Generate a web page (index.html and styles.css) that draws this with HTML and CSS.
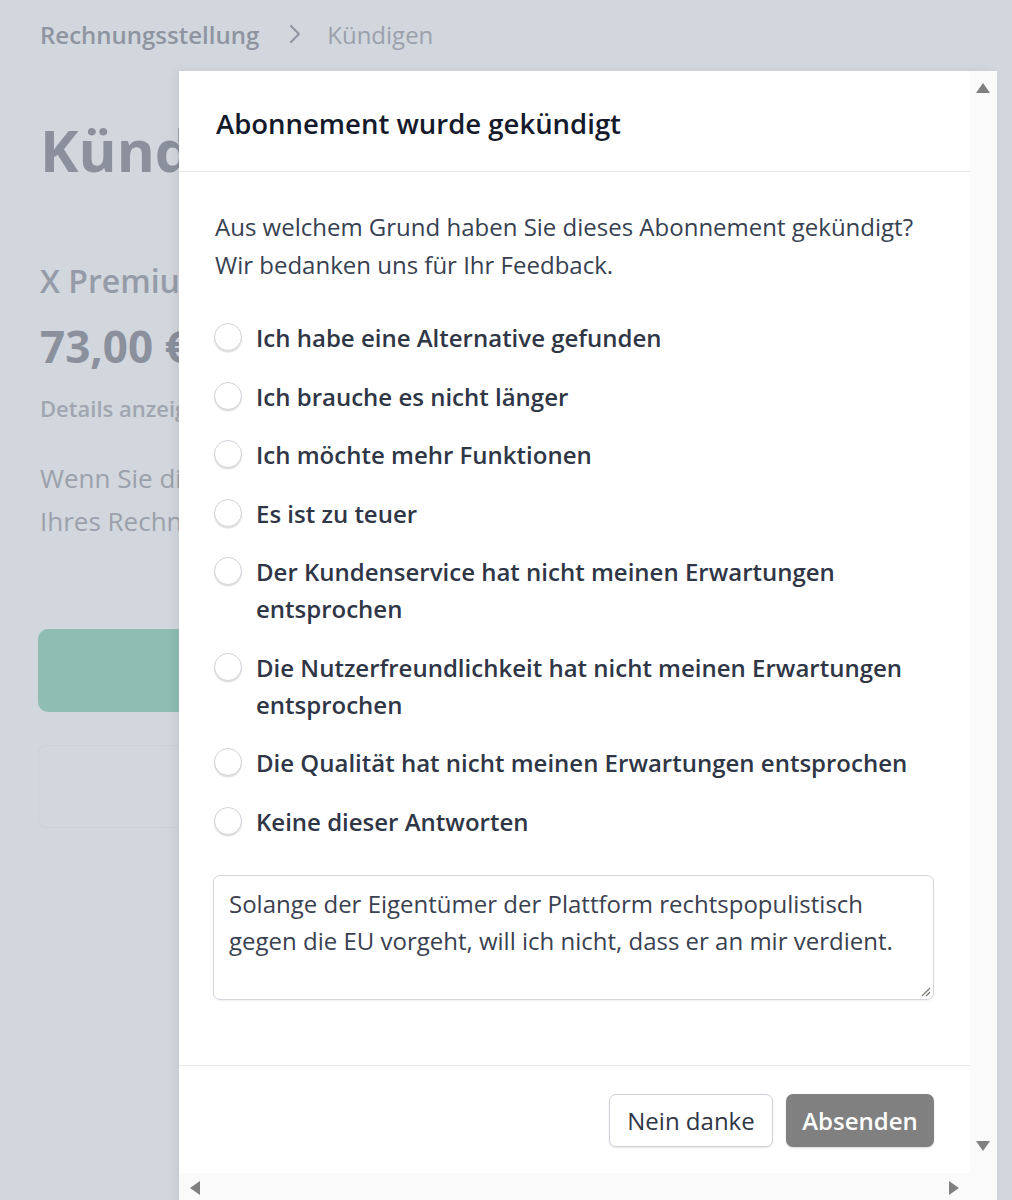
FILE: index.html
```html
<!DOCTYPE html>
<html lang="de">
<head>
<meta charset="utf-8">
<title>Abonnement kündigen</title>
<link rel="stylesheet" href="styles.css">
</head>
<body>
<div class="page">
  <nav class="crumbs">
    <span class="crumb-strong">Rechnungsstellung</span>
    <svg class="chev" width="14" height="22" viewBox="0 0 14 22"><path d="M3 3 L11 11 L3 19" fill="none" stroke="#8e95a1" stroke-width="2" stroke-linecap="round" stroke-linejoin="round"/></svg>
    <span class="crumb">Kündigen</span>
  </nav>
  <div class="clip">
    <h1 class="title">Kündigen</h1>
    <div class="plan">X Premium</div>
    <div class="price">73,00 €</div>
    <div class="details">Details anzeigen</div>
    <p class="info">Wenn Sie die Kündigung bestätigen<br>Ihres Rechnungszeitraums.</p>
  </div>
  <div class="btn-green"></div>
  <div class="btn-outline"></div>
</div>

<div class="modal">
  <div class="modal-main">
    <div class="modal-head">Abonnement wurde gekündigt</div>
    <div class="modal-body">
      <p class="question">Aus welchem Grund haben Sie dieses Abonnement gekündigt?<br>Wir bedanken uns für Ihr Feedback.</p>
      <ul class="options">
        <li class="option"><span class="radio"></span><span class="label">Ich habe eine Alternative gefunden</span></li>
        <li class="option"><span class="radio"></span><span class="label">Ich brauche es nicht länger</span></li>
        <li class="option"><span class="radio"></span><span class="label">Ich möchte mehr Funktionen</span></li>
        <li class="option"><span class="radio"></span><span class="label">Es ist zu teuer</span></li>
        <li class="option"><span class="radio"></span><span class="label">Der Kundenservice hat nicht meinen Erwartungen entsprochen</span></li>
        <li class="option"><span class="radio"></span><span class="label">Die Nutzerfreundlichkeit hat nicht meinen Erwartungen entsprochen</span></li>
        <li class="option"><span class="radio"></span><span class="label">Die Qualität hat nicht meinen Erwartungen entsprochen</span></li>
        <li class="option"><span class="radio"></span><span class="label">Keine dieser Antworten</span></li>
      </ul>
      <div class="textarea">
        <span class="ta-text">Solange der Eigentümer der Plattform rechtspopulistisch gegen die EU vorgeht, will ich nicht, dass er an mir verdient.</span>
        <svg class="grip" width="12" height="12" viewBox="0 0 12 12"><path d="M11 3 L3 11 M11 7 L7 11" stroke="#7a7a7a" stroke-width="1.2"/></svg>
      </div>
    </div>
    <div class="modal-foot">
      <button class="btn btn-secondary">Nein danke</button>
      <button class="btn btn-primary">Absenden</button>
    </div>
  </div>
  <div class="vscroll">
    <span class="arr arr-up"></span>
    <span class="arr arr-down"></span>
  </div>
  <div class="hscroll">
    <span class="arr arr-left"></span>
    <span class="arr arr-right"></span>
  </div>
  <div class="corner"></div>
</div>
</body>
</html>
```

FILE: styles.css
```css
html, body {
  margin: 0;
  padding: 0;
}
body {
  width: 1012px;
  height: 1200px;
  overflow: hidden;
  background: #d2d6dd;
  font-family: "Open Sans", "Noto Sans", sans-serif;
  position: relative;
}
.page {
  padding: 13px 40px 0 40px;
  color: #8e95a1;
}
.crumbs {
  display: flex;
  align-items: center;
  font-size: 24px;
  height: 42px;
}
.crumb-strong { font-weight: 600; color: #8e95a1; }
.chev { margin: 0 25px 0 29px; }
.crumb { color: #9aa1ac; }
.clip {
  width: 139px;
  overflow: hidden;
  white-space: nowrap;
}
.title {
  margin: 55px 0 0 0;
  font-size: 58px;
  font-weight: 700;
  line-height: 80px;
  color: #8a919d;
}
.plan {
  margin-top: 68px;
  font-size: 32px;
  font-weight: 600;
  line-height: 46px;
  color: #959ca8;
}
.price {
  margin-top: 16px;
  font-size: 44px;
  font-weight: 700;
  line-height: 52px;
  color: #8a919d;
}
.details {
  margin-top: 21px;
  font-size: 22px;
  font-weight: 600;
  line-height: 30px;
  color: #a0a6b0;
}
.info {
  margin: 34px 0 0 0;
  font-size: 26px;
  line-height: 43px;
  color: #9ba1ab;
}
.btn-green {
  margin-top: 86px;
  margin-left: -2px;
  height: 83px;
  width: 600px;
  border-radius: 10px;
  background: #8fbdb2;
}
.btn-outline {
  margin-top: 33px;
  margin-left: -2px;
  height: 81px;
  width: 600px;
  border-radius: 8px;
  border: 1px solid #cdd1d8;
}

.modal {
  position: absolute;
  left: 179px;
  top: 71px;
  width: 818px;
  height: 1140px;
  background: #fff;
  display: grid;
  grid-template-columns: 791px 27px;
  grid-template-rows: 1102px 27px;
  box-shadow: -4px 0 10px rgba(0,0,0,0.06);
}
.modal-main {
  overflow: hidden;
}
.modal-head {
  height: 101px;
  padding: 4px 37px 0 37px;
  display: flex;
  align-items: center;
  box-sizing: border-box;
  font-size: 27.5px;
  font-weight: 600;
  color: #141a2b;
  border-bottom: 1.5px solid #e4e7eb;
}
.modal-body {
  padding: 36px 36px 65px 36px;
  border-bottom: 1.5px solid #e4e7eb;
}
.question {
  margin: 0;
  font-size: 24px;
  line-height: 38px;
  color: #374151;
}
.options {
  list-style: none;
  margin: 35px 0 0 0;
  padding: 0;
  display: flex;
  flex-direction: column;
  gap: 21.5px;
}
.option {
  display: flex;
  align-items: flex-start;
  gap: 14px;
}
.radio {
  flex: none;
  box-sizing: border-box;
  width: 28px;
  height: 28px;
  margin: 4px 0 0 -1px;
  border-radius: 50%;
  border: 1.5px solid #d0d3d8;
  box-shadow: 0 1.5px 1px rgba(0,0,0,0.12);
  background: #fff;
}
.label {
  font-size: 24px;
  font-weight: 600;
  line-height: 37px;
  color: #2f3646;
}
.textarea {
  position: relative;
  margin-top: 35px;
  height: 104px;
  padding: 9px 16px 10px 15px;
  border: 1.5px solid #d3d6db;
  border-radius: 7px;
  box-shadow: 0 1px 2px rgba(0,0,0,0.06);
  font-size: 24px;
  line-height: 37px;
  color: #3a4150;
  margin-left: -2px;
}
.grip {
  position: absolute;
  right: 2px;
  bottom: 2px;
}
.modal-foot {
  padding: 28px 36px 0 36px;
  display: flex;
  justify-content: flex-end;
  gap: 13px;
}
.btn {
  font-family: inherit;
  font-size: 24px;
  height: 53px;
  border-radius: 7px;
  padding: 0 10px;
}
.btn-secondary {
  width: 164px;
  background: #fff;
  color: #2f3646;
  font-weight: 500;
  border: 1.5px solid #cfd2d8;
  box-shadow: 0 1px 2px rgba(0,0,0,0.1);
}
.btn-primary {
  width: 148px;
  background: #808080;
  color: #fff;
  font-weight: 600;
  border: none;
  box-shadow: 0 1px 2px rgba(0,0,0,0.15);
}
.vscroll {
  position: relative;
  background: #fafafa;
}
.hscroll {
  position: relative;
  background: #fafafa;
}
.corner {
  background: #fafafa;
}
.arr {
  position: absolute;
  width: 0;
  height: 0;
  border-style: solid;
}
.arr-up {
  top: 12px;
  left: 6px;
  border-width: 0 7px 10px 7px;
  border-color: transparent transparent #808080 transparent;
}
.arr-down {
  bottom: 22px;
  left: 6px;
  border-width: 10px 7px 0 7px;
  border-color: #808080 transparent transparent transparent;
}
.arr-left {
  top: 8px;
  left: 11px;
  border-width: 7px 10px 7px 0;
  border-color: transparent #808080 transparent transparent;
}
.arr-right {
  top: 8px;
  right: 11px;
  border-width: 7px 0 7px 10px;
  border-color: transparent transparent transparent #808080;
}
```
